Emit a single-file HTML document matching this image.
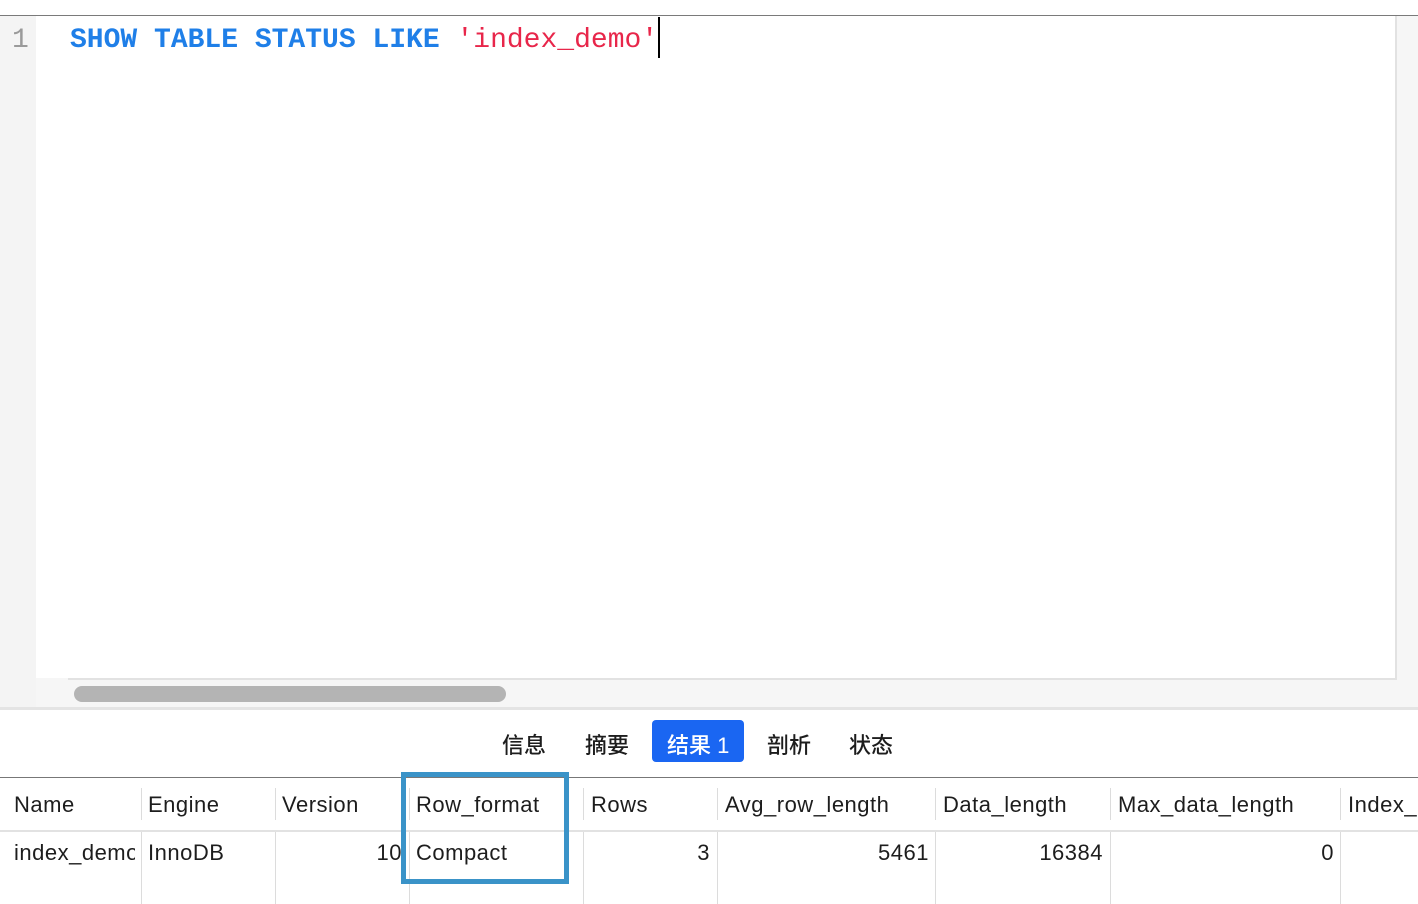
<!DOCTYPE html>
<html><head><meta charset="utf-8"><style>
*{margin:0;padding:0;box-sizing:border-box}
body{width:1418px;height:904px;position:relative;overflow:hidden;background:#fff;font-family:"Liberation Sans","Noto Sans CJK SC",sans-serif;color:#1d1d1d}
.a{position:absolute}
.code{font-family:"Liberation Mono",monospace;font-size:28px;font-weight:bold;white-space:pre}
.tab{position:absolute;top:728px;font-size:22px;color:#1d1d1d;font-weight:500}
.h{position:absolute;top:792px;font-size:22px;letter-spacing:0.5px;white-space:nowrap}
.d{position:absolute;top:840px;font-size:22px;letter-spacing:0.5px;white-space:nowrap}
.vs{position:absolute;width:1px;background:#dcdcdc}
</style></head><body>
<div class="a" style="left:0;top:15px;width:1418px;height:1px;background:#7a7a7a"></div>
<div class="a" style="left:0;top:16px;width:36px;height:692px;background:#f4f4f4"></div>
<div class="a" style="left:1395px;top:16px;width:23px;height:692px;background:#f6f6f6;border-left:2px solid #e2e2e2"></div>
<div class="a" style="left:36px;top:678px;width:1382px;height:30px;background:#f6f6f6"></div>
<div class="a" style="left:68px;top:678px;width:1329px;height:2px;background:#e2e2e2"></div>
<div class="a" style="left:74px;top:686px;width:432px;height:16px;border-radius:8px;background:#b4b4b4"></div>
<div class="a" style="left:0;top:707px;width:1418px;height:3px;background:#e4e4e4"></div>
<div class="a code" style="left:12px;top:25px;color:#9a9a9a;font-weight:normal">1</div>
<div class="a code" style="left:70px;top:25px"><span style="color:#1f7fe8">SHOW TABLE STATUS LIKE </span><span style="color:#e8264a;font-weight:normal">'index_demo'</span></div>
<div class="a" style="left:658px;top:17px;width:2px;height:41px;background:#000"></div>
<div class="tab" style="left:502px">信息</div>
<div class="tab" style="left:585px">摘要</div>
<div class="a" style="left:652px;top:720px;width:92px;height:42px;background:#1a66f2;border-radius:4px"></div>
<div class="tab" style="left:667px;color:#fff">结果 1</div>
<div class="tab" style="left:767px">剖析</div>
<div class="tab" style="left:849px">状态</div>
<div class="a" style="left:0;top:777px;width:1418px;height:1px;background:#777"></div>
<div class="a" style="left:0;top:830px;width:1418px;height:2px;background:#e2e2e2"></div>
<div class="vs" style="left:141px;top:788px;height:32px"></div>
<div class="vs" style="left:275px;top:788px;height:32px"></div>
<div class="vs" style="left:409px;top:788px;height:32px"></div>
<div class="vs" style="left:583px;top:788px;height:32px"></div>
<div class="vs" style="left:717px;top:788px;height:32px"></div>
<div class="vs" style="left:935px;top:788px;height:32px"></div>
<div class="vs" style="left:1110px;top:788px;height:32px"></div>
<div class="vs" style="left:1340px;top:788px;height:32px"></div>
<div class="vs" style="left:141px;top:832px;height:72px"></div>
<div class="vs" style="left:275px;top:832px;height:72px"></div>
<div class="vs" style="left:409px;top:832px;height:72px"></div>
<div class="vs" style="left:583px;top:832px;height:72px"></div>
<div class="vs" style="left:717px;top:832px;height:72px"></div>
<div class="vs" style="left:935px;top:832px;height:72px"></div>
<div class="vs" style="left:1110px;top:832px;height:72px"></div>
<div class="vs" style="left:1340px;top:832px;height:72px"></div>
<div class="h" style="left:14px">Name</div>
<div class="h" style="left:148px">Engine</div>
<div class="h" style="left:282px">Version</div>
<div class="h" style="left:416px">Row_format</div>
<div class="h" style="left:591px">Rows</div>
<div class="h" style="left:725px">Avg_row_length</div>
<div class="h" style="left:943px">Data_length</div>
<div class="h" style="left:1118px">Max_data_length</div>
<div class="h" style="left:1348px">Index_</div>
<div class="d" style="left:14px;width:121px;overflow:hidden">index_demo</div>
<div class="d" style="left:148px">InnoDB</div>
<div class="d" style="left:275px;width:127px;text-align:right">10</div>
<div class="d" style="left:416px">Compact</div>
<div class="d" style="left:583px;width:127px;text-align:right">3</div>
<div class="d" style="left:717px;width:212px;text-align:right">5461</div>
<div class="d" style="left:935px;width:168px;text-align:right">16384</div>
<div class="d" style="left:1110px;width:224px;text-align:right">0</div>
<div class="a" style="left:401px;top:772px;width:168px;height:112px;border:5px solid #3a93c8"></div>
</body></html>
